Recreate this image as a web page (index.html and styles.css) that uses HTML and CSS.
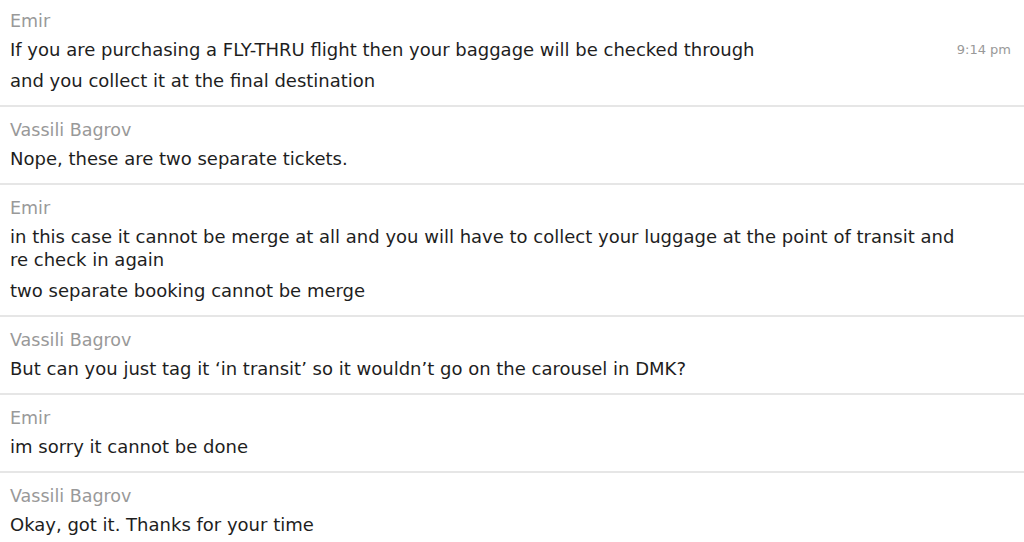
FILE: index.html
```html
<!DOCTYPE html>
<html lang="en">
<head>
  <meta charset="UTF-8" />
  <title>Conversation</title>
  <link rel="stylesheet" href="styles.css">
</head>
<body>

<div class="thread">

  <div class="group">
    <div class="author">Emir</div>
    <div class="msg">
      <p>If you are purchasing a FLY-THRU flight then your baggage will be checked through</p>
      <span class="time">9:14 pm</span>
    </div>
    <div class="msg">
      <p>and you collect it at the final destination</p>
    </div>
  </div>

  <div class="group">
    <div class="author">Vassili Bagrov</div>
    <div class="msg">
      <p>Nope, these are two separate tickets.</p>
    </div>
  </div>

  <div class="group">
    <div class="author">Emir</div>
    <div class="msg">
      <p>in this case it cannot be merge at all and you will have to collect your luggage at the point of transit and re check in again</p>
    </div>
    <div class="msg">
      <p>two separate booking cannot be merge</p>
    </div>
  </div>

  <div class="group">
    <div class="author">Vassili Bagrov</div>
    <div class="msg">
      <p>But can you just tag it ‘in transit’ so it wouldn’t go on the carousel in DMK?</p>
    </div>
  </div>

  <div class="group">
    <div class="author">Emir</div>
    <div class="msg">
      <p>im sorry it cannot be done</p>
    </div>
  </div>

  <div class="group">
    <div class="author">Vassili Bagrov</div>
    <div class="msg">
      <p>Okay, got it. Thanks for your time</p>
    </div>
  </div>

</div>

</body>
</html>
```

FILE: styles.css
```css
body {
  margin: 0;
  padding: 0;
  background: #fff;
  font-family: 'DejaVu Sans', sans-serif;
  color: #1e1e1e;
  overflow: hidden;
}

.thread {
  display: flex;
  flex-direction: column;
}

.group {
  padding: 13px 13px 13px 10px;
  border-bottom: 2px solid #e6e6e6;
  display: flex;
  flex-direction: column;
  gap: 8px;
}

.group:first-child {
  padding-top: 11px;
}

.author {
  font-size: 17.5px;
  line-height: 20px;
  color: #999;
  margin-bottom: -1px;
}

.msg {
  display: flex;
  align-items: flex-start;
}

.msg p {
  margin: 0;
  font-size: 18px;
  line-height: 23px;
  max-width: 950px;
}

/* timestamp sits at the far right of the first line */
.time {
  margin-left: auto;
  flex-shrink: 0;
  font-size: 13px;
  line-height: 23px;
  color: #999;
}
```
